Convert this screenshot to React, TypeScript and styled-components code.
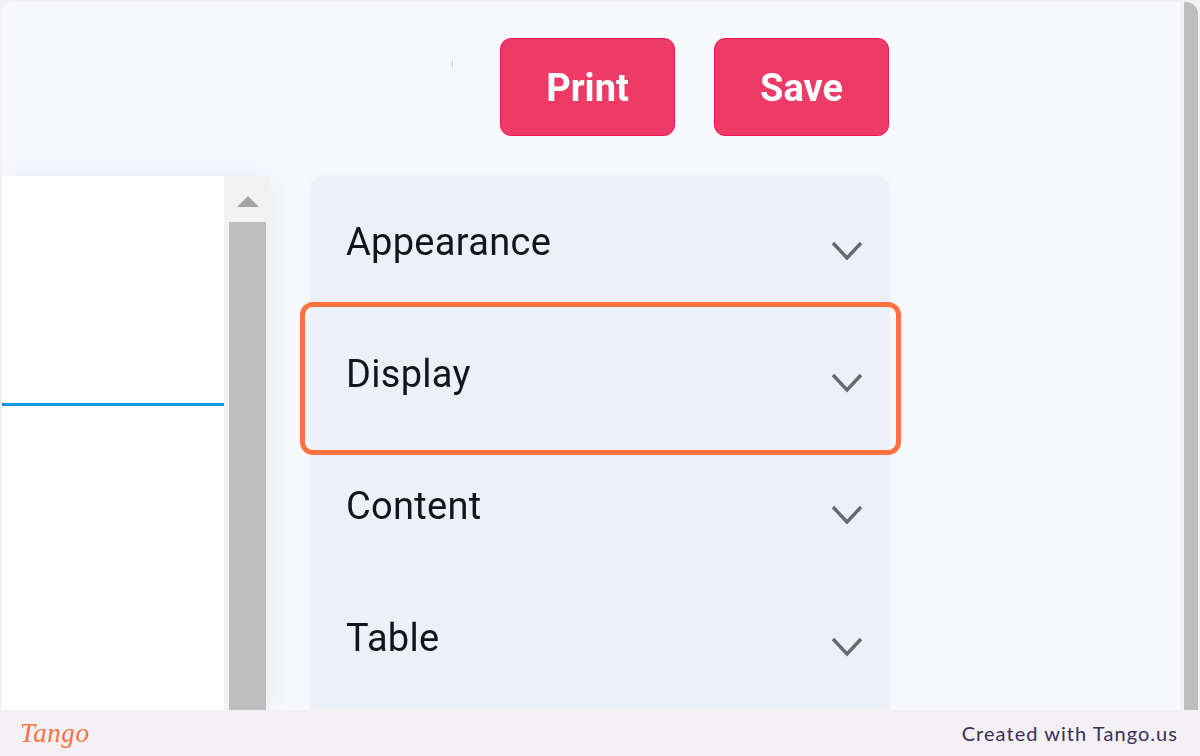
import styled, { createGlobalStyle } from 'styled-components';

const GlobalStyle = createGlobalStyle`
  html, body {
    margin: 0;
    padding: 0;
    background: #f3f1f6;
  }
  * {
    box-sizing: border-box;
  }
`;

const Page = styled.div`
  width: 1200px;
  height: 756px;
  display: flex;
  flex-direction: column;
  overflow: hidden;
  background: #f3f1f6;
  padding: 2px 2px 0;
  border-radius: 0 0 10px 10px;
`;

const Frame = styled.div`
  height: 708px;
  display: flex;
  overflow: hidden;
  background: #f8f9fd;
  border-radius: 10px 12px 0 0;
`;

const Content = styled.div`
  flex: 1;
  min-width: 0;
  display: flex;
  flex-direction: column;
`;

const Toolbar = styled.div`
  height: 174px;
  flex: none;
  display: flex;
  align-items: flex-start;
  justify-content: flex-end;
  gap: 39px;
  padding: 36px 291px 0 0;
`;

const Tick = styled.i`
  width: 1px;
  height: 6px;
  margin: 23px 8px 0 0;
  background: #b9c6d6;
`;

const ActionButton = styled.button`
  width: 175px;
  height: 98px;
  border: 1.5px solid #f0145a;
  border-radius: 11px;
  background: #ee3a66;
  color: #fff;
  font: 700 38px/1 Roboto, sans-serif;
  padding: 1px 0 0;
  filter: blur(0.4px);
`;

const Body = styled.div`
  flex: 1;
  min-height: 0;
  display: flex;
  gap: 40px;
`;

const ListPanel = styled.div`
  width: 268px;
  flex: none;
  display: flex;
  background: #fff;
  box-shadow: 0 0 28px rgba(40, 50, 90, 0.08);
`;

const ListArea = styled.div`
  flex: 1;
  padding-top: 227px;
`;

const BlueRule = styled.div`
  height: 3px;
  background: #0f95e2;
`;

const ListScrollbar = styled.div`
  width: 46px;
  flex: none;
  display: flex;
  flex-direction: column;
  align-items: center;
  background: #f1f1f1;
  padding: 0 0 0 1px;
`;

const ArrowUp = styled.div`
  width: 0;
  height: 0;
  margin: 20px 0 15px;
  border-left: 11px solid transparent;
  border-right: 11px solid transparent;
  border-bottom: 11px solid #a3a3a3;
`;

const ListThumb = styled.div`
  width: 37px;
  flex: 1;
  background: #bdbdbd;
`;

const Accordion = styled.div`
  width: 580px;
  flex: none;
  display: flex;
  flex-direction: column;
  background: #edf0f8;
  border-radius: 14px 14px 0 0;
  box-shadow: 0 0 8px rgba(60, 70, 120, 0.04);
`;

const Row = styled.div`
  position: relative;
  height: 132px;
  flex: none;
  display: flex;
  align-items: flex-start;
  justify-content: space-between;
  padding: 43px 26px 0 36px;
  border-bottom: 2px solid #eceff7;
`;

const RowLabel = styled.span`
  font: 400 38px/46px Roboto, sans-serif;
  letter-spacing: 0.3px;
  color: #14141c;
  filter: blur(0.4px);
`;

const Chevron = styled.svg`
  width: 34px;
  height: 24px;
  margin-top: 20px;
  fill: none;
  stroke: #666a70;
  stroke-width: 3.4;
  filter: blur(0.3px);
`;

const Highlight = styled.div`
  position: absolute;
  top: -6px;
  left: -10px;
  right: -11px;
  bottom: -17px;
  border: 5px solid #ff7141;
  border-radius: 13px;
  pointer-events: none;
`;

const PageScrollbar = styled.div`
  width: 18px;
  flex: none;
  display: flex;
  justify-content: flex-end;
  background: #f1f1f3;
`;

const PageThumb = styled.div`
  width: 14px;
  background: #bdbdbd;
  border-top-right-radius: 10px;
`;

const Footer = styled.footer`
  height: 46px;
  flex: none;
  display: flex;
  align-items: center;
  justify-content: space-between;
  padding: 0 20px 0 18px;
`;

const Wordmark = styled.span`
  font: italic 400 27px/1 "Liberation Serif", serif;
  color: #ff7141;
  letter-spacing: 0.6px;
`;

const Credit = styled.span`
  font: 400 20px/1 Lato, sans-serif;
  color: #3f2d56;
  letter-spacing: 1.05px;
`;

const sections = ['Appearance', 'Display', 'Content', 'Table'];

export default function App() {
  return (
    <Page>
      <GlobalStyle />
      <Frame>
        <Content>
          <Toolbar>
            <Tick />
            <ActionButton>Print</ActionButton>
            <ActionButton>Save</ActionButton>
          </Toolbar>
          <Body>
            <ListPanel>
              <ListArea>
                <BlueRule />
              </ListArea>
              <ListScrollbar>
                <ArrowUp />
                <ListThumb />
              </ListScrollbar>
            </ListPanel>
            <Accordion>
              {sections.map((name) => (
                <Row key={name}>
                  <RowLabel>{name}</RowLabel>
                  <Chevron viewBox="0 0 34 24">
                    <path d="M3 4 L17 19 L31 4" />
                  </Chevron>
                  {name === 'Display' && <Highlight />}
                </Row>
              ))}
            </Accordion>
          </Body>
        </Content>
        <PageScrollbar>
          <PageThumb />
        </PageScrollbar>
      </Frame>
      <Footer>
        <Wordmark>Tango</Wordmark>
        <Credit>Created with Tango.us</Credit>
      </Footer>
    </Page>
  );
}
